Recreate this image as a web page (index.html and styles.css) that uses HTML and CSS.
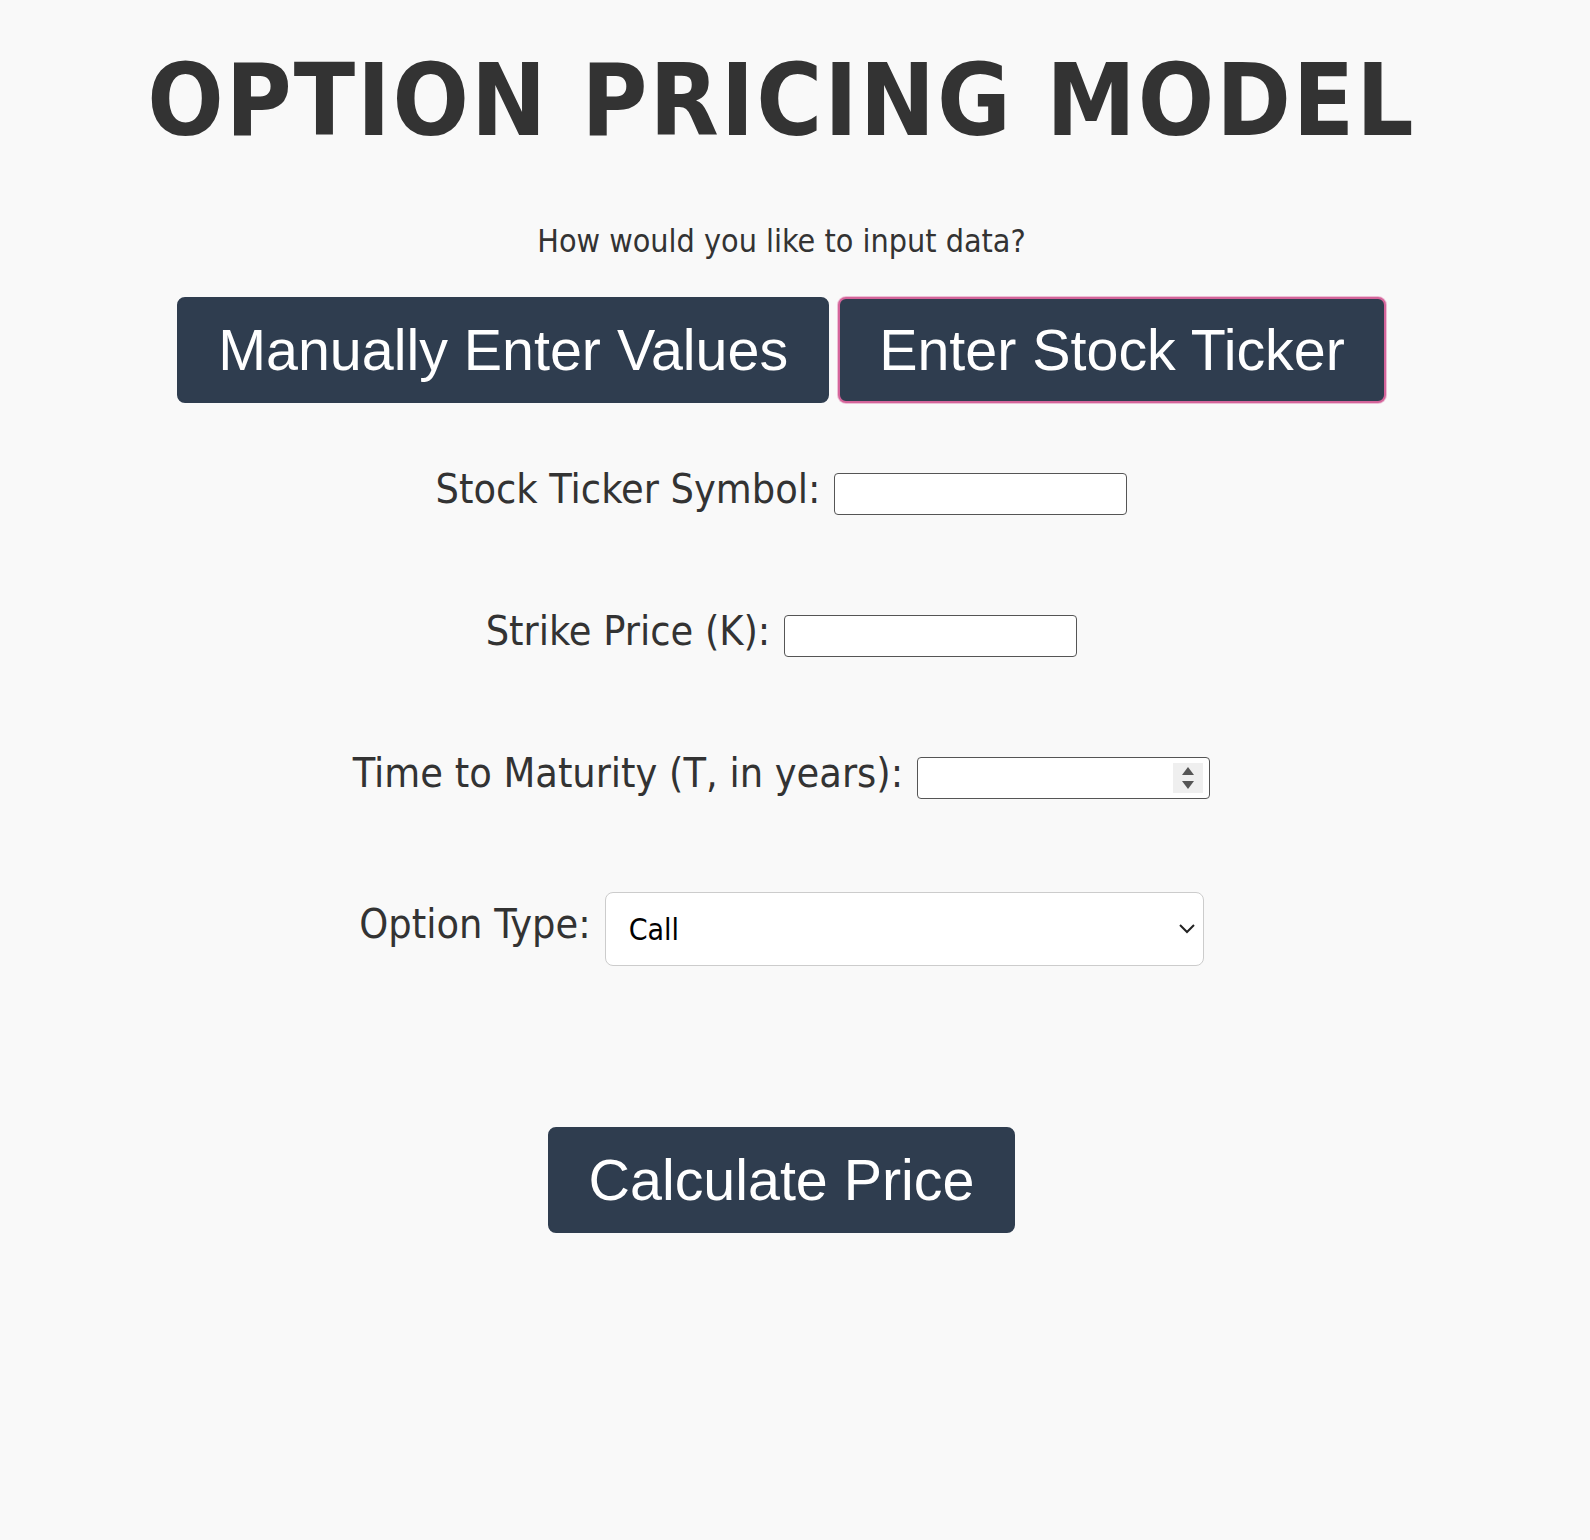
FILE: index.html
```html
<!DOCTYPE html>
<html lang="en">
<head>
<meta charset="utf-8">
<title>Option Pricing Model</title>
<link rel="stylesheet" href="styles.css">
</head>
<body>
<main class="page">
  <h1 class="title">OPTION PRICING MODEL</h1>
  <p class="prompt">How would you like to input data?</p>
  <div class="mode-buttons">
    <button class="btn" type="button">Manually Enter Values</button>
    <button class="btn btn-active" type="button">Enter Stock Ticker</button>
  </div>
  <form class="form">
    <div class="row row-first">
      <label class="label" for="ticker">Stock Ticker Symbol:</label>
      <input class="field" id="ticker" type="text">
    </div>
    <div class="row">
      <label class="label" for="strike">Strike Price (K):</label>
      <input class="field" id="strike" type="text">
    </div>
    <div class="row">
      <label class="label" for="maturity">Time to Maturity (T, in years):</label>
      <span class="number-wrap">
        <input class="field field-number" id="maturity" type="number">
        <span class="spinner" aria-hidden="true">
          <svg width="14" height="24" viewBox="0 0 14 24"><path d="M7 1 L13 9 L1 9 Z" fill="#555"/><path d="M1 15 L13 15 L7 23 Z" fill="#555"/></svg>
        </span>
      </span>
    </div>
    <div class="row row-select">
      <label class="label" for="otype">Option Type:</label>
      <span class="select-wrap">
        <select class="select" id="otype">
          <option>Call</option>
          <option>Put</option>
        </select>
        <svg class="chevron" width="18" height="12" viewBox="0 0 18 12" aria-hidden="true"><path d="M2 2 L9 9 L16 2" fill="none" stroke="#222" stroke-width="2"/></svg>
      </span>
    </div>
    <div class="submit-row">
      <button class="btn btn-calc" type="button">Calculate Price</button>
    </div>
  </form>
</main>
</body>
</html>
```
FILE: styles.css
```css
html, body {
  margin: 0;
  padding: 0;
  background: #f9f9f9;
}

body {
  min-height: 1540px;
  color: #333333;
  font-family: "DejaVu Sans Condensed", "DejaVu Sans", sans-serif;
}

.page {
  padding-right: 27px;
  text-align: center;
}

.title {
  margin: 41px 0 0;
  font-size: 100px;
  line-height: 120px;
  font-weight: bold;
  letter-spacing: 2px;
  color: #333333;
  font-family: "DejaVu Sans Condensed", "DejaVu Sans", sans-serif;
}

.prompt {
  margin: 60px 0 0;
  font-size: 32px;
  line-height: 40px;
}

.mode-buttons {
  margin-top: 36px;
  display: flex;
  justify-content: center;
  gap: 9px;
}

.btn {
  font-family: "Liberation Sans", Arial, sans-serif;
  font-size: 57.4px;
  line-height: 64px;
  color: #ffffff;
  background: #2f3d4f;
  border: 2px solid #2f3d4f;
  border-radius: 8px;
  padding: 19px 39px;
  cursor: pointer;
}

.btn-active {
  border-color: #d4649a;
  box-shadow: 0 0 0 1px rgba(222, 120, 170, 0.45);
}

.form {
  margin-top: 67px;
  display: flex;
  flex-direction: column;
  align-items: center;
}

.row {
  display: flex;
  align-items: center;
  justify-content: center;
  gap: 14px;
  height: 48px;
  margin-top: 94px;
}

.row-first {
  margin-top: 0;
}

.row-select {
  height: 74px;
  margin-top: 90px;
}

.label {
  font-size: 41px;
  line-height: 48px;
  color: #333333;
  position: relative;
  top: -5px;
}

.field {
  box-sizing: border-box;
  width: 293px;
  height: 42px;
  border: 1px solid #555555;
  border-radius: 4px;
  background: #ffffff;
  font-size: 20px;
  padding: 0 8px;
  margin: 0;
}

.number-wrap {
  position: relative;
  display: inline-block;
  height: 42px;
}

.field-number {
  -moz-appearance: textfield;
}

.field-number::-webkit-inner-spin-button,
.field-number::-webkit-outer-spin-button {
  -webkit-appearance: none;
  margin: 0;
}

.spinner {
  position: absolute;
  right: 7px;
  top: 6px;
  width: 30px;
  height: 30px;
  background: #efefef;
  display: flex;
  align-items: center;
  justify-content: center;
}

.select-wrap {
  position: relative;
  display: inline-block;
  height: 74px;
}

.select {
  box-sizing: border-box;
  width: 599px;
  height: 74px;
  border: 1px solid #cccccc;
  border-radius: 8px;
  background: #ffffff;
  color: #000000;
  font-family: "DejaVu Sans Condensed", "DejaVu Sans", sans-serif;
  font-size: 30px;
  padding: 0 20px 0 23px;
  margin: 0;
  -webkit-appearance: none;
  appearance: none;
}

.chevron {
  position: absolute;
  right: 8px;
  top: 31px;
  pointer-events: none;
}

.submit-row {
  margin-top: 161px;
  display: flex;
  justify-content: center;
}

.btn-calc {
  padding: 19px 39px;
}
```
